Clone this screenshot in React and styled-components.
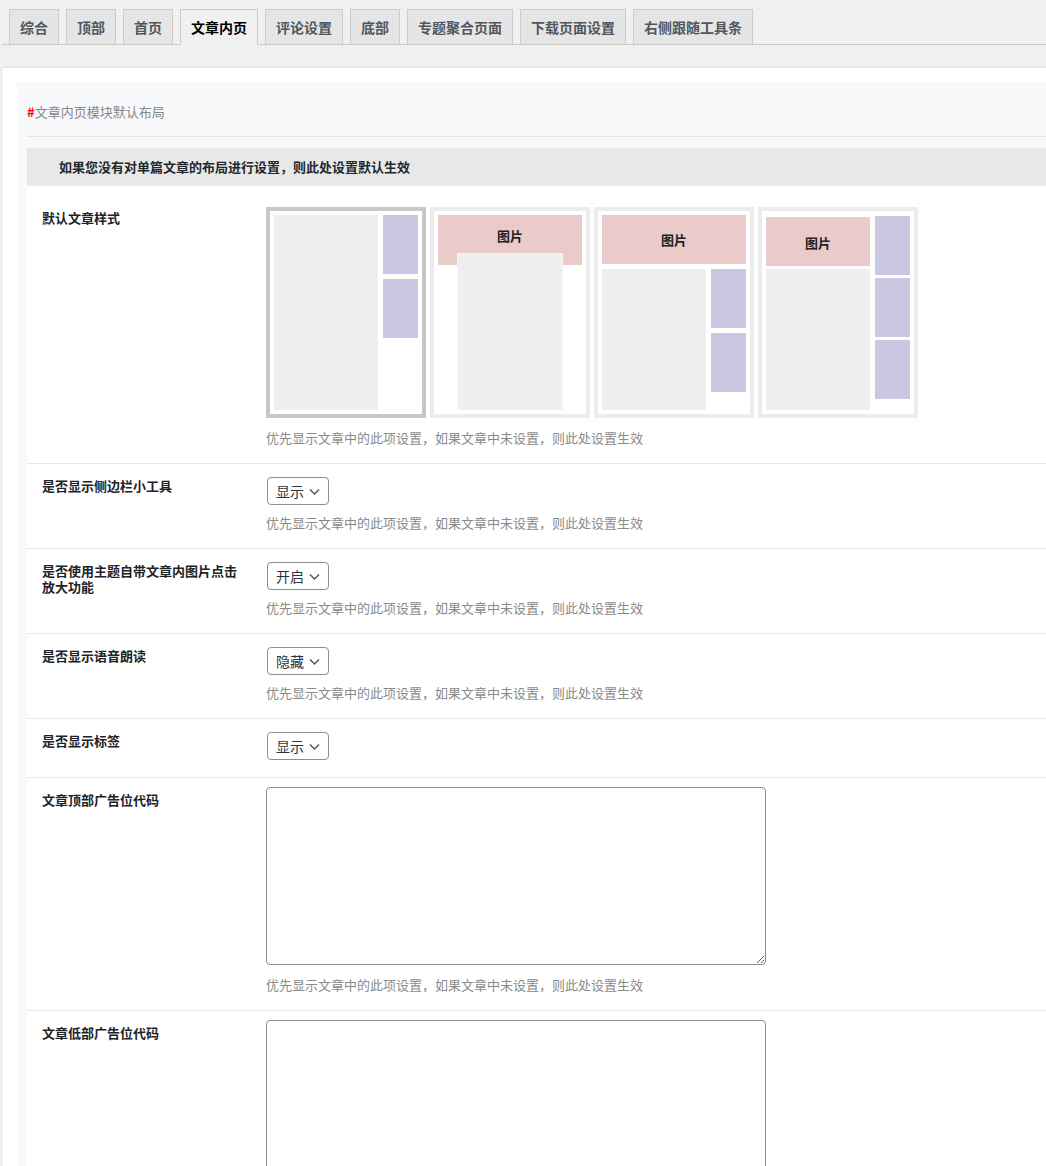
import styled, { createGlobalStyle } from "styled-components";

const GlobalStyle = createGlobalStyle`
    html, body {
        margin: 0;
        padding: 0;
        background: #f0f0f1;
        overflow: hidden;
    }
    body {
        font-family: "Noto Sans CJK SC", "Liberation Sans", sans-serif;
        font-size: 13px;
        color: #1d2327;
    }
`

const Page = styled.div`
    padding-top: 9px;
    width: 1046px;
`

const TabBar = styled.div`
    display: flex;
    margin-left: 2px;
    border-bottom: 1px solid #cccccc;
    height: 35px;
`

const Tab = styled.div`
    margin-left: 7px;
    padding: 5px 10px;
    height: 24px;
    line-height: 24px;
    font-size: 14px;
    font-weight: 700;
    border: 1px solid #cccccc;
    border-bottom: ${({ active }) => (active ? "1px solid #f0f0f1" : "none")};
    background: ${({ active }) => (active ? "#f0f0f1" : "#e5e5e5")};
    color: ${({ active }) => (active ? "#000000" : "#50575e")};
    white-space: nowrap;
`

const Panel = styled.div`
    margin: 22px 0 0 3px;
    background: #ffffff;
    border-top: 1px solid #e5e5e5;
    padding: 14px 0 0 14px;
`

const Section = styled.div`
    background: #f8f9fa;
    padding-left: 10px;
`

const SectionHead = styled.div`
    padding: 20px 0 14px;
    line-height: 20px;
    color: #888888;
    border-bottom: 1px solid #e5e5e5;
    span {
        color: #ff0000;
        font-weight: 700;
    }
`

const Notice = styled.div`
    margin-top: 11px;
    background: #e8e8e8;
    height: 38px;
    line-height: 38px;
    padding-left: 32px;
    font-weight: 700;
    color: #23282d;
`

const Body = styled.div`
    background: #ffffff;
    padding-top: 9px;
`

const Row = styled.div`
    display: flex;
    padding: ${({ first }) => (first ? "10px" : "9px")} 0 15px;
    border-top: ${({ first }) => (first ? "none" : "1px solid #e8e8e8")};
`

const Label = styled.div`
    width: 200px;
    padding-left: 15px;
    margin-right: 24px;
    margin-top: 5px;
    line-height: 16px;
    font-weight: 700;
    color: #1d2327;
    flex-shrink: 0;
`

const Field = styled.div`
    display: flex;
    flex-direction: column;
    align-items: flex-start;
`

const Hint = styled.div`
    margin-top: ${({ gap }) => gap || 6}px;
    line-height: 20px;
    color: #8a8a8a;
`

const Thumbs = styled.div`
    display: flex;
    gap: 4px;
    margin-top: 2px;
`

const Thumb = styled.div`
    width: 160px;
    height: 211px;
    box-sizing: border-box;
    border: 4px solid ${({ selected }) => (selected ? "#c8c8c8" : "#ececec")};
    background: #ffffff;
    padding: 4px;
    svg {
        display: block;
    }
`

const Select = styled.div`
    display: flex;
    align-items: center;
    gap: 4px;
    margin: 4px 0 2px 1px;
    height: 26px;
    padding: 0 7px 0 8px;
    border: 1px solid #8c8f94;
    border-radius: 4px;
    font-size: 14px;
    color: #2c3338;
    background: #ffffff;
`

const TextArea = styled.textarea`
    display: block;
    width: 500px;
    height: 178px;
    box-sizing: border-box;
    border: 1px solid #8c8f94;
    border-radius: 4px;
    margin: 0;
    background: #ffffff;
    font-family: inherit;
`

const PINK = "#ebcaca";
const LAV = "#cac7e2";
const GREY = "#efefef";

const PicText = ({ x, y }) => (
    <text x={x} y={y} textAnchor="middle" fontSize="13" fontWeight="700" fill="#222"
        fontFamily='"Noto Sans CJK SC", sans-serif' dominantBaseline="central">图片</text>
);

const layouts = [
    <svg width="144" height="195" key="a">
        <rect x="0" y="0" width="104" height="196" fill={GREY} />
        <rect x="109" y="0" width="35" height="59" fill={LAV} />
        <rect x="109" y="64" width="35" height="59" fill={LAV} />
    </svg>,
    <svg width="144" height="195" key="b">
        <rect x="0" y="0" width="144" height="50" fill={PINK} />
        <PicText x={72} y={20} />
        <rect x="19.5" y="38.5" width="105" height="158" fill={GREY} stroke="#f6f6f6" />
    </svg>,
    <svg width="144" height="195" key="c">
        <rect x="0" y="0" width="144" height="49" fill={PINK} />
        <PicText x={72} y={24} />
        <rect x="0" y="54" width="104" height="142" fill={GREY} />
        <rect x="109" y="54" width="35" height="59" fill={LAV} />
        <rect x="109" y="118" width="35" height="59" fill={LAV} />
    </svg>,
    <svg width="144" height="195" key="d">
        <rect x="0" y="2" width="104" height="49" fill={PINK} />
        <PicText x={52} y={27} />
        <rect x="0" y="54" width="104" height="142" fill={GREY} />
        <rect x="109" y="1" width="35" height="59" fill={LAV} />
        <rect x="109" y="63" width="35" height="59" fill={LAV} />
        <rect x="109" y="125" width="35" height="59" fill={LAV} />
    </svg>,
];

const Chevron = () => (
    <svg width="13" height="13" viewBox="0 0 13 13">
        <path d="M2 4.5 L6.5 9 L11 4.5" fill="none" stroke="#50575e" strokeWidth="1.5" />
    </svg>
);

const HINT = "优先显示文章中的此项设置，如果文章中未设置，则此处设置生效";

const tabs = ["综合", "顶部", "首页", "文章内页", "评论设置", "底部", "专题聚合页面", "下载页面设置", "右侧跟随工具条"];

const selects = [
    { label: "是否显示侧边栏小工具", value: "显示", hint: true },
    { label: "是否使用主题自带文章内图片点击放大功能", value: "开启", hint: true },
    { label: "是否显示语音朗读", value: "隐藏", hint: true },
    { label: "是否显示标签", value: "显示", hint: false },
];

const App = () => {
    return (
        <Page>
            <GlobalStyle />
            <TabBar>
                {tabs.map((t) => (
                    <Tab key={t} active={t === "文章内页"}>{t}</Tab>
                ))}
            </TabBar>
            <Panel>
                <Section>
                    <SectionHead><span>#</span>文章内页模块默认布局</SectionHead>
                    <Notice>如果您没有对单篇文章的布局进行设置，则此处设置默认生效</Notice>
                    <Body>
                        <Row first>
                            <Label>默认文章样式</Label>
                            <Field>
                                <Thumbs>
                                    {layouts.map((l, i) => (
                                        <Thumb key={i} selected={i === 0}>{l}</Thumb>
                                    ))}
                                </Thumbs>
                                <Hint gap={10}>{HINT}</Hint>
                            </Field>
                        </Row>
                        {selects.map((s) => (
                            <Row key={s.label}>
                                <Label>{s.label}</Label>
                                <Field>
                                    <Select>{s.value}<Chevron /></Select>
                                    {s.hint && <Hint>{HINT}</Hint>}
                                </Field>
                            </Row>
                        ))}
                        <Row>
                            <Label>文章顶部广告位代码</Label>
                            <Field>
                                <TextArea />
                                <Hint gap={10}>{HINT}</Hint>
                            </Field>
                        </Row>
                        <Row>
                            <Label>文章低部广告位代码</Label>
                            <Field>
                                <TextArea />
                            </Field>
                        </Row>
                    </Body>
                </Section>
            </Panel>
        </Page>
    );
}

export default App;
